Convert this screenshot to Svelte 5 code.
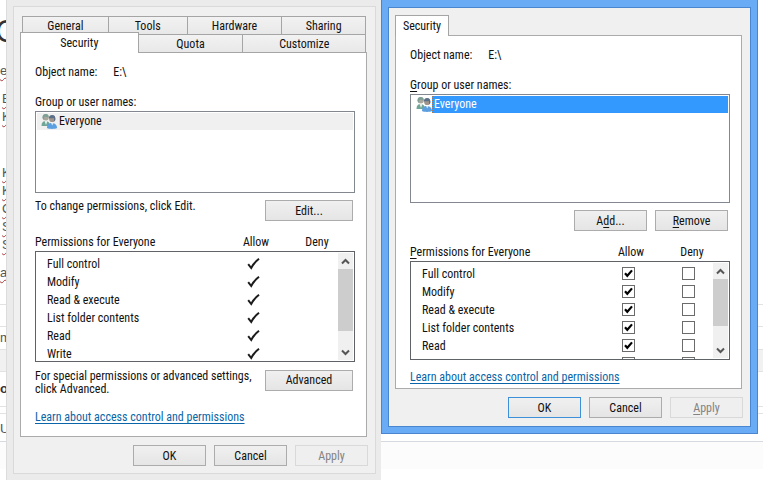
<script lang="ts">
    interface Permission {
        name: string;
        allow: boolean;
        deny: boolean;
    }

    const topTabs = [
        { label: "General", grow: 86 },
        { label: "Tools", grow: 79 },
        { label: "Hardware", grow: 95 },
        { label: "Sharing", grow: 84 },
    ];

    const bottomTabs = [
        { label: "Security", grow: 118 },
        { label: "Quota", grow: 105 },
        { label: "Customize", grow: 123 },
    ];

    const names = ["Full control", "Modify", "Read & execute", "List folder contents", "Read", "Write"];

    let permissions: Permission[] = $state(names.map((name) => ({ name, allow: true, deny: false })));
</script>

{#snippet users()}
    <svg class="users" viewBox="0 0 16 16" aria-hidden="true">
        <path d="M0.5 13 C0.5 9.5 2 8 4.5 8 S9 9.5 9 13 Z" fill="#6fa596" />
        <path d="M3.5 8 L5 12 L6.5 8 Z" fill="#e4efec" />
        <circle cx="4.8" cy="4.6" r="3" fill="#a9a79b" />
        <path d="M1.6 5.5 C1 2 3 0.8 5 1 C7.3 1 8.2 3 7.4 4.4 C6 3.6 4 3.4 3.2 4.2 L3 7 Z" fill="#7d9f96" />
        <path d="M6 15 C6 11.5 8 10 10.8 10 S16 11.5 16 15 C14 16.2 8 16.2 6 15 Z" fill="#5b9fe0" />
        <path d="M10 10 L11.2 12.5 L12.6 10 Z" fill="#d3e8fa" />
        <circle cx="11.2" cy="6" r="3.1" fill="#a0948c" />
        <path d="M8 5.6 C7.6 3 9.2 1.8 11.2 1.9 C13.6 2 14.8 3.6 14.3 7 L13.3 8.4 L12.8 5 C11 5.4 9.4 4.8 8 5.6 Z" fill="#5c6f88" />
    </svg>
{/snippet}

{#snippet scrollbar(size: string)}
    <div class="scrollbar">
        <button class="arrow" aria-label="Scroll up">
            <svg viewBox="0 0 9 7"><path d="M1 5.5 L4.5 2 L8 5.5" /></svg>
        </button>
        <div class="thumb {size}"></div>
        <button class="arrow end" aria-label="Scroll down">
            <svg viewBox="0 0 9 7"><path d="M1 1.5 L4.5 5 L8 1.5" /></svg>
        </button>
    </div>
{/snippet}

<div class="desktop">
    <div class="document">
        <div class="title">C</div>
        <div class="line wide"><u>ec</u></div>
        <div class="line indent"><u>E</u></div>
        <div class="line indent space"><u>K</u></div>
        <div class="line indent"><u>K</u></div>
        <div class="line indent"><u>K</u></div>
        <div class="line indent"><u>C</u></div>
        <div class="line indent"><u>S</u></div>
        <div class="line indent"><u>S</u></div>
        <div class="line last"><u>al</u></div>
        <div class="row short"></div>
        <div class="row">m</div>
        <div class="row shaded"></div>
        <div class="row head">o</div>
        <div class="row tiny"></div>
        <div class="row medium">U</div>
        <div class="row foot"></div>
    </div>

    <main class="windows">
        <section class="window inactive" aria-label="Drive properties">
            <div class="client">
                <div class="tabs upper">
                    {#each topTabs as tab}
                        <button class="tab" style="flex-grow: {tab.grow}">{tab.label}</button>
                    {/each}
                </div>
                <div class="tabs lower">
                    {#each bottomTabs as tab, i}
                        <button class="tab" class:current={i === 0} style="flex-grow: {tab.grow}">{tab.label}</button>
                    {/each}
                </div>

                <div class="panel">
                    <div class="object"><span>Object name:</span><span>E:\</span></div>
                    <div class="caption">Group or user names:</div>
                    <div class="listbox short">
                        <div class="user">{@render users()}<span class="user-name">Everyone</span></div>
                    </div>
                    <div class="actions">
                        <p class="hint">To change permissions, click Edit.</p>
                        <button class="btn large">Edit...</button>
                    </div>

                    <div class="heading">
                        <span>Permissions for Everyone</span>
                        <span class="center">Allow</span>
                        <span class="center">Deny</span>
                    </div>
                    <div class="permissions tall">
                        <table>
                            <tbody>
                                {#each permissions as p}
                                    <tr>
                                        <td>{p.name}</td>
                                        <td class="allow">
                                            {#if p.allow}
                                                <svg class="tick" viewBox="0 0 13 13" role="img" aria-label="Allowed">
                                                    <path d="M1.2 7.2 L4.2 11 C6 7.5 8.5 4.5 12 1.8" />
                                                </svg>
                                            {/if}
                                        </td>
                                        <td class="deny"></td>
                                    </tr>
                                {/each}
                            </tbody>
                        </table>
                        {@render scrollbar("long")}
                    </div>

                    <div class="advanced">
                        <p>For special permissions or advanced settings, click Advanced.</p>
                        <button class="btn large">Advanced</button>
                    </div>
                    <div class="learn"><a href="#learn">Learn about access control and permissions</a></div>
                </div>

                <div class="footer">
                    <button class="btn">OK</button>
                    <button class="btn">Cancel</button>
                    <button class="btn" disabled>Apply</button>
                </div>
            </div>
        </section>

        <section class="window active" aria-label="Permissions">
            <div class="client">
                <div class="tabs single">
                    <button class="tab current">Security</button>
                </div>

                <div class="panel">
                    <div class="object"><span>Object name:</span><span>E:\</span></div>
                    <div class="caption"><u>G</u>roup or user names:</div>
                    <div class="listbox">
                        <div class="user selected">{@render users()}<span class="user-name">Everyone</span></div>
                    </div>
                    <div class="actions">
                        <button class="btn">A<u>d</u>d...</button>
                        <button class="btn"><u>R</u>emove</button>
                    </div>

                    <div class="heading">
                        <span><u>P</u>ermissions for Everyone</span>
                        <span class="center">Allow</span>
                        <span class="center">Deny</span>
                    </div>
                    <div class="permissions">
                        <table>
                            <tbody>
                                {#each permissions as p}
                                    <tr>
                                        <td>{p.name}</td>
                                        <td class="allow">
                                            <input type="checkbox" aria-label="Allow {p.name}" bind:checked={p.allow} />
                                        </td>
                                        <td class="deny">
                                            <input type="checkbox" aria-label="Deny {p.name}" bind:checked={p.deny} />
                                        </td>
                                    </tr>
                                {/each}
                            </tbody>
                        </table>
                        {@render scrollbar("medium")}
                    </div>
                    <div class="learn"><a href="#learn">Learn about access control and permissions</a></div>
                </div>

                <div class="footer">
                    <button class="btn default">OK</button>
                    <button class="btn">Cancel</button>
                    <button class="btn" disabled><u>A</u>pply</button>
                </div>
            </div>
        </section>
    </main>
</div>

<style>
    :global(body) {
        margin: 0;
        background: #ffffff;
    }

    .desktop {
        display: grid;
        overflow: hidden;
        font-family: "Roboto Condensed", Roboto, "Liberation Sans", sans-serif;
        font-size: 12px;
        line-height: 16px;
        color: #111111;
    }

    .desktop * {
        box-sizing: border-box;
    }

    button {
        font: inherit;
        color: inherit;
        padding: 0;
        margin: 0;
    }

    p {
        margin: 0;
    }

    u {
        text-underline-offset: 2px;
    }

    /* page behind the dialogs */
    .document {
        grid-area: 1 / 1;
        margin-right: 7px;
        font-family: "Liberation Sans", sans-serif;
        font-size: 13px;
        line-height: 18px;
        color: #555555;
        white-space: nowrap;
    }

    .document u {
        text-decoration: underline wavy #b03a3a 1px;
    }

    .title {
        height: 62px;
        padding-top: 12px;
        font-size: 32px;
        line-height: 38px;
        text-indent: -5px;
        color: #333333;
    }

    .line {
        height: 18px;
    }

    .line.wide {
        height: 28px;
    }

    .line.indent {
        padding-left: 2px;
    }

    .line.space {
        height: 56px;
    }

    .line.last {
        height: 50px;
        padding-top: 10px;
    }

    .row {
        height: 23px;
        border-top: 1px solid #e2e2e2;
        line-height: 22px;
    }

    .row.short {
        height: 22px;
    }

    .row.shaded {
        height: 22px;
        background: #f1f1f1;
    }

    .row.head {
        height: 35px;
        font-weight: bold;
        line-height: 34px;
        color: #333333;
    }

    .row.tiny {
        height: 7px;
    }

    .row.medium {
        height: 28px;
        line-height: 30px;
    }

    .row.foot {
        background: #fcfcfc;
        border-color: #d5dae0;
        height: 28px;
    }

    .windows {
        grid-area: 1 / 1;
        display: grid;
        grid-template-columns: 375fr 377fr;
        align-items: start;
        padding: 0 12px 0 6px;
    }

    .window.inactive {
        padding: 6px 5px 6px 6px;
        border-left: 1px solid #dcdcdc;
        background: #ebebeb;
    }

    .window.active {
        padding: 7px 6px 6px;
        border: 1px solid #4a86cf;
        border-top: 0;
        background: #6aabf6;
    }

    .client {
        background: #f0f0f0;
    }

    .inactive .client {
        padding: 9px 7px 7px 6px;
        border: 1px solid #dadada;
    }

    .active .client {
        padding: 7px 7px 8px 6px;
        border: 1px solid #4a86cf;
    }

    .tabs {
        display: flex;
        margin-right: 1px;
    }

    .tabs.upper {
        padding: 0 1px 0 2px;
    }

    .tabs.lower {
        margin-top: -1px;
        padding-right: 1px;
    }

    .tab {
        flex: 1 1 0;
        height: 19px;
        margin-left: -1px;
        border: 1px solid #a5a5a5;
        background: linear-gradient(#f2f2f2, #e8e8e8);
    }

    .tab:first-child {
        margin-left: 0;
    }

    .tab.current {
        position: relative;
        height: 21px;
        margin-top: -2px;
        border-bottom: 0;
        background: #ffffff;
    }

    .single .tab {
        flex: 0 0 54px;
        margin-top: 0;
    }

    .panel {
        margin: -1px 1px 0 0;
        padding: 11px 11px 11px 14px;
        border: 1px solid #ababab;
        background: #ffffff;
    }

    .active .panel {
        padding-bottom: 3px;
    }

    .object {
        display: flex;
        gap: 16px;
        margin-bottom: 14px;
    }

    .caption {
        margin-bottom: 1px;
    }

    .listbox {
        height: 109px;
        padding: 1px;
        border: 1px solid #828790;
    }

    .listbox.short {
        height: 82px;
    }

    .user {
        display: flex;
        height: 17px;
        padding-left: 4px;
        line-height: 17px;
    }

    .inactive .user {
        background: #f0f0f0;
    }

    .user-name {
        flex: 1;
        padding-left: 2px;
    }

    .selected .user-name {
        background: #3399ff;
        outline: 1px dotted #b07a4a;
        outline-offset: -1px;
        color: #ffffff;
    }

    .users {
        width: 16px;
        height: 16px;
    }

    .actions {
        display: flex;
        justify-content: flex-end;
        gap: 8px;
        margin: 7px 2px 13px 0;
    }

    .inactive .actions {
        margin-top: 5px;
    }

    .hint {
        flex: 1;
    }

    .hint + .btn {
        margin-top: 2px;
    }

    .btn {
        width: 73px;
        height: 21px;
        border: 1px solid #acacac;
        background: linear-gradient(#f0f0f0, #e5e5e5);
    }

    .btn.large {
        width: 88px;
    }

    .btn.default {
        border-color: #3c8fd8;
    }

    .btn:disabled {
        border-color: #d9d9d9;
        background: #efefef;
        color: #838383;
    }

    .heading {
        display: grid;
        grid-template-columns: 1fr 70px 52px;
        padding-right: 12px;
        margin-bottom: 1px;
    }

    .center {
        text-align: center;
    }

    .permissions {
        display: flex;
        align-items: flex-start;
        height: 99px;
        padding: 1px;
        border: 1px solid #5f6368;
        overflow: hidden;
    }

    .permissions.tall {
        height: 111px;
    }

    table {
        flex: 1;
        margin-top: 1px;
        border-collapse: collapse;
        table-layout: fixed;
    }

    tr {
        height: 18px;
    }

    td {
        padding: 2px 0 0 10px;
        line-height: 16px;
    }

    td.allow,
    td.deny {
        width: 70px;
        padding: 0;
        text-align: center;
        line-height: 0;
    }

    td.deny {
        width: 50px;
    }

    .tick {
        width: 13px;
        height: 13px;
        fill: none;
        stroke: #1c1c1c;
        stroke-width: 2;
    }

    input[type="checkbox"] {
        appearance: none;
        width: 13px;
        height: 13px;
        margin: 0;
        border: 1px solid #6b6b6b;
        background: #ffffff;
        vertical-align: middle;
    }

    input[type="checkbox"]:checked {
        background: #ffffff url("data:image/svg+xml,%3Csvg xmlns='http://www.w3.org/2000/svg' viewBox='0 0 11 11'%3E%3Cpath d='M2 5.2 L4.3 7.8 L9 2.4' fill='none' stroke='%23000' stroke-width='2.2'/%3E%3C/svg%3E");
    }

    .scrollbar {
        display: flex;
        flex-direction: column;
        align-self: stretch;
        width: 15px;
        background: #f0f0f0;
    }

    .arrow {
        display: flex;
        align-items: center;
        justify-content: center;
        height: 16px;
        border: 0;
        background: none;
    }

    .arrow.end {
        margin-top: auto;
    }

    .arrow svg {
        width: 9px;
        height: 7px;
        fill: none;
        stroke: #555555;
        stroke-width: 2;
    }

    .thumb {
        background: #cdcdcd;
    }

    .thumb.long {
        height: 62px;
    }

    .thumb.medium {
        height: 47px;
    }

    .advanced {
        display: flex;
        justify-content: space-between;
        margin: 8px 2px 13px 0;
        line-height: 13px;
    }

    .advanced p {
        flex: 0 1 226px;
    }

    .learn {
        margin-top: 9px;
    }

    a {
        color: #0a66a8;
        text-underline-offset: 2px;
    }

    .footer {
        display: flex;
        justify-content: flex-end;
        gap: 8px;
        margin-top: 8px;
    }
</style>
